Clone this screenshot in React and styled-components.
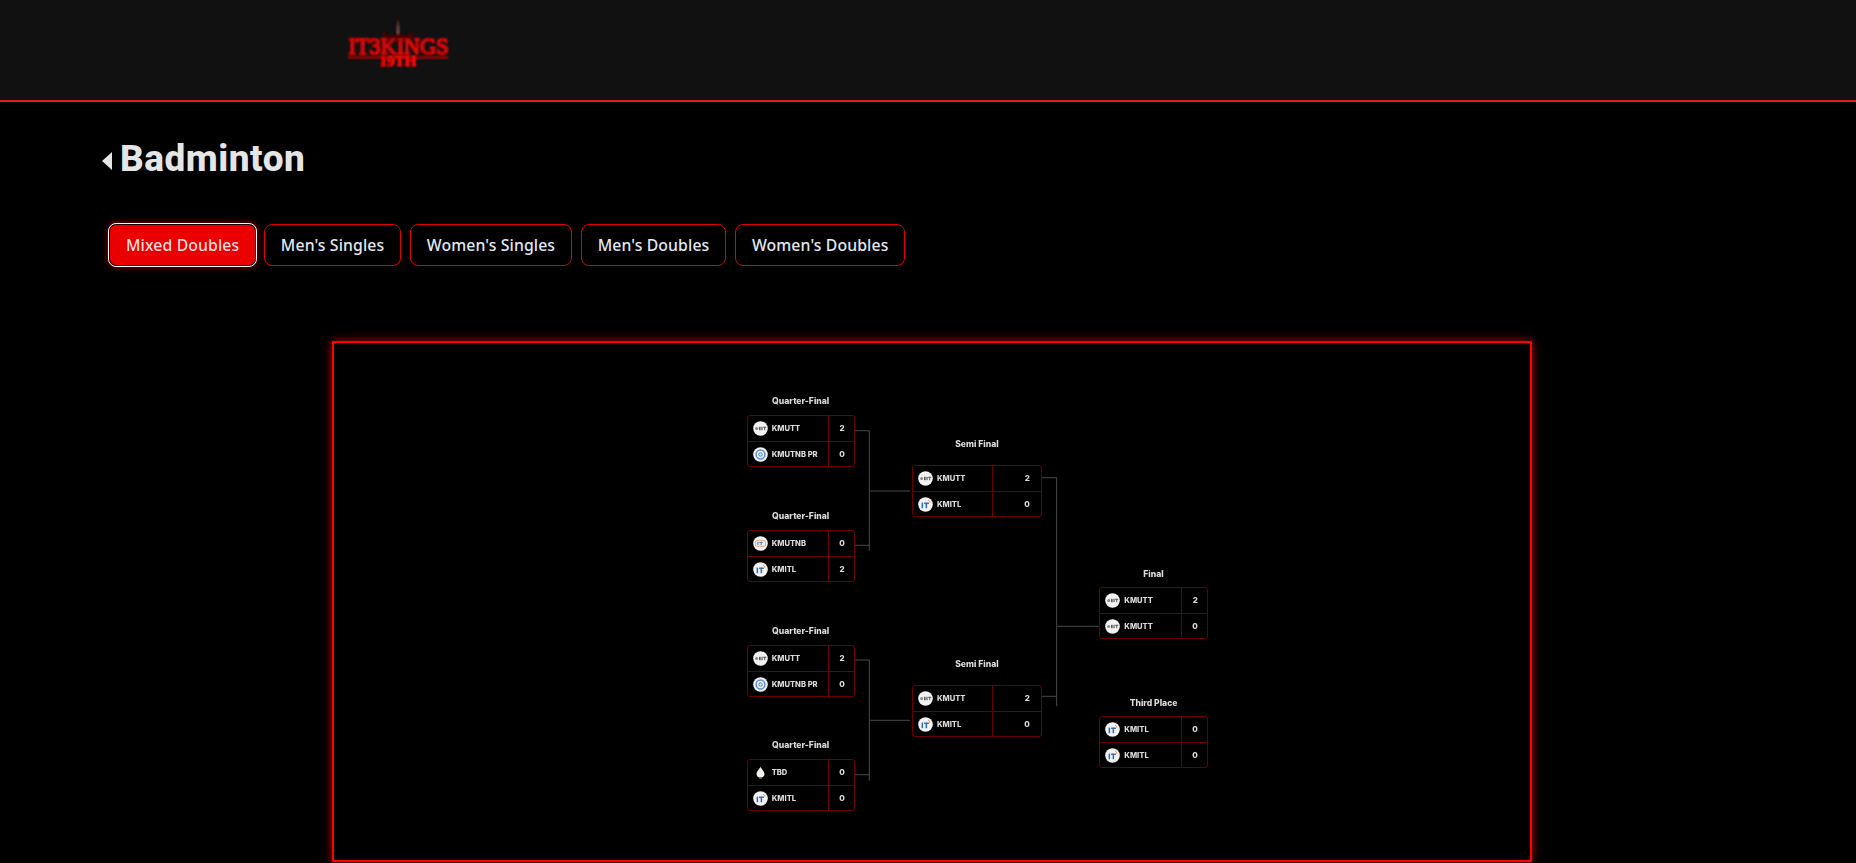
import React from 'react'
import styled, { createGlobalStyle } from 'styled-components'

const GlobalStyle = createGlobalStyle`
  html, body {
    margin: 0;
    padding: 0;
    background: #000;
    overflow: hidden;
  }
`

const Page = styled.div`
  width: 1856px;
  height: 863px;
  background: #000;
  font-family: "Noto Sans", "Liberation Sans", sans-serif;
`

const Header = styled.header`
  height: 100px;
  background: #111;
  border-bottom: 2px solid #e11d1d;
  display: flex;
  align-items: flex-start;
  padding-left: 340px;
`

const Main = styled.main`
  padding: 32px 0 0 102px;
`

const TitleRow = styled.div`
  display: flex;
  align-items: flex-end;
  gap: 8px;
  height: 48px;
`

const BackArrow = styled.span`
  display: block;
  width: 0;
  height: 0;
  margin-bottom: 12px;
  border-top: 9px solid transparent;
  border-bottom: 9px solid transparent;
  border-right: 10px solid #e5e5e5;
`

const Title = styled.h1`
  margin: 0;
  font-family: Roboto, "Liberation Sans", sans-serif;
  font-size: 37px;
  line-height: 46px;
  font-weight: 800;
  letter-spacing: 0.5px;
  color: #e5e5e5;
`

const Tabs = styled.div`
  display: flex;
  align-items: center;
  gap: 8.5px;
  margin: 41px 0 0 6px;
`

const Tab = styled.button`
  box-sizing: border-box;
  height: ${({ $active }) => ($active ? '44px' : '42px')};
  margin-right: ${({ $active }) => ($active ? '-2px' : '0')};
  padding: 0 16px;
  border-radius: 8px;
  border: ${({ $active }) => ($active ? '2px solid #160000' : '1px solid #e00000')};
  outline: ${({ $active }) => ($active ? '1px solid #fff' : 'none')};
  outline-offset: -1px;
  background: ${({ $active }) => ($active ? '#ea0000' : '#000')};
  box-shadow: ${({ $active }) => ($active ? '0 0 6px #a00000' : 'none')};
  color: ${({ $active }) => ($active ? '#f5dede' : '#e2e8f0')};
  font-family: "Noto Sans", "Liberation Sans", sans-serif;
  font-size: 15.8px;
  font-weight: 500;
  letter-spacing: 0.11px;
  white-space: nowrap;
`

const Frame = styled.section`
  position: relative;
  box-sizing: border-box;
  width: 1200px;
  height: 521px;
  margin: 74px 0 0 230px;
  border: 2px solid #f00;
  box-shadow: 0 0 9px #b00000;
`

const Wires = styled.svg`
  position: absolute;
  inset: 0;
  width: 100%;
  height: 100%;
`

const Node = styled.div`
  position: absolute;
  left: ${({ $x }) => $x}px;
  top: ${({ $y }) => $y}px;
  width: ${({ $w }) => $w}px;
  filter: blur(0.25px);
`

const RoundLabel = styled.div`
  height: 12px;
  margin-bottom: ${({ $gap }) => $gap}px;
  font-family: Inter, "Liberation Sans", sans-serif;
  font-size: 8.6px;
  line-height: 12px;
  font-weight: 800;
  text-align: center;
  color: #dcdcdc;
`

const Card = styled.div`
  box-sizing: border-box;
  height: 52px;
  border: 1px solid #6a0000;
  border-radius: 3px;
`

const Row = styled.div`
  display: grid;
  grid-template-columns: 1fr ${({ $score }) => $score}px;
  height: 25px;
  & + & {
    border-top: 1px solid #6a0000;
  }
`

const Team = styled.div`
  display: flex;
  align-items: center;
  gap: 4px;
  padding-left: 5px;
  font-family: Inter, "Liberation Sans", sans-serif;
  font-size: 7.6px;
  font-weight: 800;
  color: #dadada;
  white-space: nowrap;
`

const Score = styled.div`
  display: flex;
  align-items: center;
  justify-content: flex-end;
  padding-right: ${({ $pad }) => $pad}px;
  border-left: 1px solid #6a0000;
  font-family: Inter, "Liberation Sans", sans-serif;
  font-size: 8px;
  font-weight: 800;
  color: #dadada;
`

const LogoSvg = styled.svg`
  flex: none;
  width: 15px;
  height: 15px;
`

const TeamLogo = ({ team }) => {
  if (team === 'TBD') {
    return (
      <LogoSvg viewBox="0 0 15 15">
        <path d="M7.5 1.5 C8 4 11.5 6 11.5 9 C11.5 11.5 9.6 12.6 7.5 12.6 C5.4 12.6 3.5 11.5 3.5 9 C3.5 6 7 4 7.5 1.5 Z" fill="#f2f2f2" />
        <rect x="6" y="12.6" width="3" height="1.2" fill="#8a6a2a" />
      </LogoSvg>
    )
  }
  return (
    <LogoSvg viewBox="0 0 15 15">
      <circle cx="7.5" cy="7.5" r="7.3" fill="#f2f2f2" />
      {team === 'KMUTT' && (
        <g fill="#5a5a5a">
          <circle cx="3.6" cy="7.5" r="1.5" fill="#8a8a8a" />
          <rect x="6" y="5.8" width="1.6" height="3.4" />
          <rect x="8.4" y="5.8" width="1.2" height="3.4" />
          <rect x="10.2" y="5.8" width="3" height="1" />
          <rect x="11.2" y="5.8" width="1" height="3.4" />
        </g>
      )}
      {team === 'KMUTNB PR' && (
        <g fill="none">
          <circle cx="7.5" cy="7.5" r="4.4" stroke="#5a90d8" strokeWidth="1.5" />
          <circle cx="7.5" cy="7.5" r="1.7" stroke="#3f78c8" strokeWidth="1" />
        </g>
      )}
      {team === 'KMUTNB' && (
        <g>
          <rect x="2.4" y="4.8" width="10.2" height="5.4" rx="1.4" fill="none" stroke="#e8a070" strokeWidth="1" />
          <rect x="4.4" y="6" width="1.2" height="3" fill="#5a80c0" />
          <rect x="6.4" y="6" width="3.4" height="1" fill="#5a80c0" />
          <rect x="7.6" y="6" width="1.1" height="3" fill="#5a80c0" />
        </g>
      )}
      {team === 'KMITL' && (
        <g>
          <rect x="3.6" y="5.6" width="1.5" height="5.6" fill="#2f6cc0" />
          <rect x="6" y="5.6" width="5" height="1.3" fill="#2f6cc0" />
          <rect x="7.6" y="5.6" width="1.5" height="5.6" fill="#2f6cc0" />
          <path d="M10 3.2 C11.2 3.6 11.8 4.4 11.8 5.6" fill="none" stroke="#e8842c" strokeWidth="1" />
        </g>
      )}
    </LogoSvg>
  )
}

const Match = ({ label, x, y, w, score, pad, gap, rows }) => (
  <Node $x={x} $y={y} $w={w}>
    <RoundLabel $gap={gap}>{label}</RoundLabel>
    <Card>
      {rows.map(([team, points], index) => (
        <Row $score={score} key={index}>
          <Team>
            <TeamLogo team={team} />
            {team}
          </Team>
          <Score $pad={pad}>{points}</Score>
        </Row>
      ))}
    </Card>
  </Node>
)

const Logo = () => (
  <svg width="130" height="80" viewBox="0 0 130 80">
    <defs>
      <filter id="logoGlow" x="-20%" y="-40%" width="140%" height="180%">
        <feGaussianBlur stdDeviation="0.8" result="soft" />
        <feMerge>
          <feMergeNode in="soft" />
          <feMergeNode in="soft" />
          <feMergeNode in="soft" />
        </feMerge>
      </filter>
    </defs>
    <g filter="url(#logoGlow)">
      <path d="M58 18 L59.2 36 L56.8 36 Z" fill="#6a4444" />
      <path d="M42 32 C49 37 54 37 58 34 C62 37 67 37 74 32 C71 40 65 42 58 42 C51 42 45 40 42 32 Z" fill="#4a0606" />
      <text x="58.5" y="54" textAnchor="middle" fontFamily="Liberation Serif, serif" fontSize="24" fill="#b00808" stroke="#ee0c0c" strokeWidth="0.5" textLength="100" lengthAdjust="spacingAndGlyphs">
        IT3KINGS
      </text>
      <rect x="8" y="57" width="100" height="1" fill="#a80808" />
      <text x="58" y="65.5" textAnchor="middle" fontFamily="Liberation Serif, serif" fontSize="15" fontWeight="700" fill="#e60a0a" textLength="37" lengthAdjust="spacingAndGlyphs">
        19TH
      </text>
    </g>
  </svg>
)

const tabs = ["Mixed Doubles", "Men's Singles", "Women's Singles", "Men's Doubles", "Women's Doubles"]

// frame inner origin is at 334,344 on the page
const quarter = { label: 'Quarter-Final', w: 108, score: 25.5, pad: 9, gap: 8 }
const semi = { label: 'Semi Final', w: 130, score: 48.5, pad: 11, gap: 15 }
const last = { w: 108.5, score: 25.5, pad: 9, gap: 7 }

const matches = [
  { ...quarter, x: 412.7, y: 51.7, rows: [['KMUTT', 2], ['KMUTNB PR', 0]] },
  { ...quarter, x: 412.7, y: 166.7, rows: [['KMUTNB', 0], ['KMITL', 2]] },
  { ...quarter, x: 412.7, y: 281.7, rows: [['KMUTT', 2], ['KMUTNB PR', 0]] },
  { ...quarter, x: 412.7, y: 395.7, rows: [['TBD', 0], ['KMITL', 0]] },
  { ...semi, x: 577.9, y: 94.7, rows: [['KMUTT', 2], ['KMITL', 0]] },
  { ...semi, x: 577.9, y: 314.7, rows: [['KMUTT', 2], ['KMITL', 0]] },
  { ...last, label: 'Final', x: 765.3, y: 224.7, rows: [['KMUTT', 2], ['KMUTT', 0]] },
  { ...last, label: 'Third Place', x: 765.3, y: 353.7, rows: [['KMITL', 0], ['KMITL', 0]] },
]

const wires = [
  'M520.7 87.7 H535.3 M535.3 87.7 V207.7 M520.7 202.3 H535.3 M535.3 148 H576',
  'M520.7 317 H535.3 M535.3 317 V437.7 M520.7 431.7 H535.3 M535.3 377.3 H576',
  'M707.7 134.7 H722.7 M722.7 134.7 V363.3 M707.7 353.3 H722.7 M722.7 283.3 H765.3',
]

const App = () => (
  <Page>
    <GlobalStyle />
    <Header>
      <Logo />
    </Header>
    <Main>
      <TitleRow>
        <BackArrow />
        <Title>Badminton</Title>
      </TitleRow>
      <Tabs>
        {tabs.map((tab, index) => (
          <Tab $active={index === 0} key={tab}>{tab}</Tab>
        ))}
      </Tabs>
      <Frame>
        <Wires>
          {wires.map((d, index) => (
            <path d={d} key={index} fill="none" stroke="#4a4a4a" strokeWidth="1" />
          ))}
        </Wires>
        {matches.map((match, index) => (
          <Match {...match} key={index} />
        ))}
      </Frame>
    </Main>
  </Page>
)

export default App
